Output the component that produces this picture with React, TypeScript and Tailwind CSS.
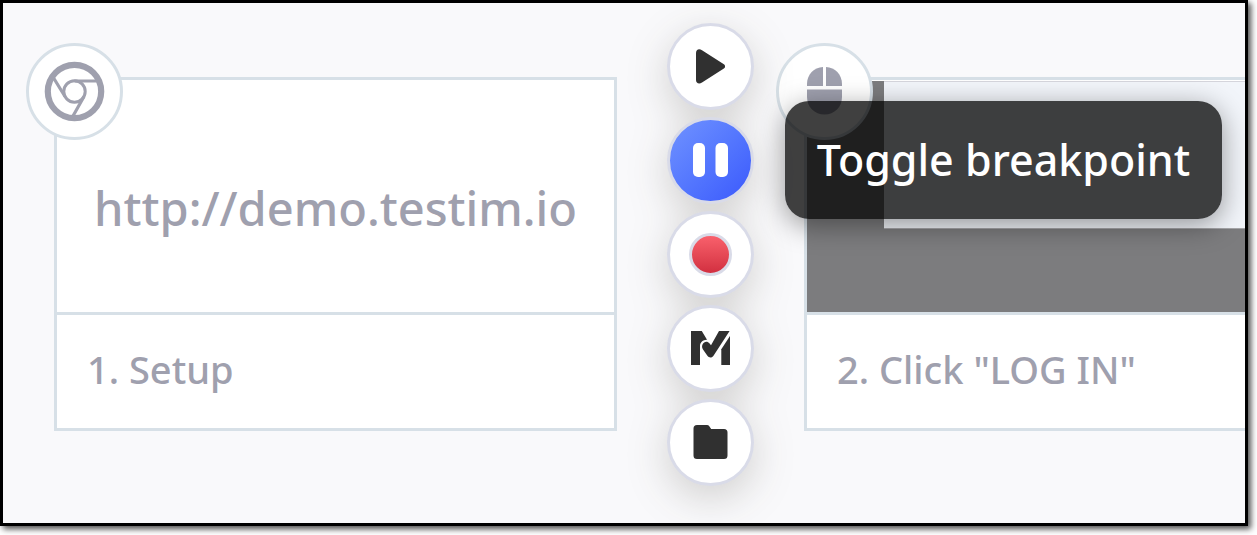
import type { ReactNode } from "react";

function ChromeIcon() {
  return (
    <svg viewBox="0 0 61 61" className="size-[61px]" fill="none" stroke="#9fa0ae" aria-hidden="true">
      <circle cx="30.500" cy="30.500" r="26.700" strokeWidth="6.200" />
      <circle cx="30.500" cy="30.500" r="10.700" strokeWidth="3" />
      <path d="M30.500 20H53.500M21 35.500L9 16M40 35.500L29 55" strokeWidth="3.200" />
    </svg>
  );
}

function MouseIcon() {
  return (
    <svg viewBox="0 0 35 49" className="h-[49px] w-[35px]" fill="#9fa0ae" aria-hidden="true">
      <path d="M16 0V19H0V17C0 7.500 7 0.400 16 0Z" />
      <path d="M19 0C28 0.400 35 7.500 35 17V19H19Z" />
      <path d="M0 22.500H35V30C35 40 27.500 47.500 17.500 47.500S0 40 0 30Z" />
    </svg>
  );
}

function PlayIcon() {
  return (
    <svg viewBox="0 0 30 35" className="h-[35px] w-[30px]" fill="#303030" aria-hidden="true">
      <path d="M0 4C0 0.500 3 -0.800 6 1.200L27.500 15C29.600 16.300 29.600 18.500 27.500 19.800L6 33.500C3 35.500 0 34.200 0 31Z" />
    </svg>
  );
}

function PauseIcon() {
  return (
    <svg viewBox="0 0 35 35" className="size-[35px]" fill="#ffffff" aria-hidden="true">
      <rect width="12" height="34" rx="5" />
      <rect x="22.500" width="12.500" height="34" rx="5" />
    </svg>
  );
}

function MarkIcon() {
  return (
    <svg viewBox="0 0 39 35" className="h-[35px] w-[39px]" fill="#303030" aria-hidden="true">
      <path d="M0 0H10.800L16.200 8.900C12.500 8.500 9 11.500 9 15V34H0Z" />
      <path d="M28 0H38.600L22.500 24.700C21 27 18 27 16.400 24.800L12 18.500C8.800 13.500 14.800 7.800 18.600 12.500L20 14.200Z" />
      <path d="M39 5V34H30.300V18.300Z" />
    </svg>
  );
}

function FolderIcon() {
  return (
    <svg viewBox="0 0 35 35" className="size-[35px]" fill="#303030" aria-hidden="true">
      <path d="M4 0H14Q15.500 0 16.300 1.200L18.200 4H31Q34.500 4 34.500 7.500V30.500Q34.500 34 31 34H4Q0.500 34 0.500 30.500V3.500Q0.500 0 4 0Z" />
    </svg>
  );
}

function RoundButton({ label, active, children }: { label: string; active?: boolean; children: ReactNode }) {
  return (
    <button
      type="button"
      aria-label={label}
      className={
        active
          ? "flex size-[87px] items-center justify-center rounded-full border-3 border-[#d9dbe8] bg-linear-to-br from-[#7394ff] to-[#3a55fc] bg-origin-border"
          : "flex size-[87px] items-center justify-center rounded-full border-3 border-[#d9dbe8] bg-white"
      }
    >
      {children}
    </button>
  );
}

function StepCard({
  icon,
  title,
  className,
  children,
}: {
  icon: ReactNode;
  title: string;
  className: string;
  children: ReactNode;
}) {
  return (
    <article className={`relative mt-[54px] flex flex-col border-3 border-[#d7e0e7] bg-white ${className}`}>
      <div className="flex h-[232px] flex-col">{children}</div>
      <h2 className="flex h-[116px] items-center border-t-3 border-[#d7e0e7] px-[30px] pb-1 text-[38px] font-medium whitespace-nowrap text-[#9fa0ae]">
        {title}
      </h2>
      <div className="absolute -top-[37px] -left-[31px] flex size-[97px] items-center justify-center rounded-full border-3 border-[#d7e0e7] bg-white">
        {icon}
      </div>
    </article>
  );
}

export default function App() {
  return (
    <div className="flex min-h-screen bg-white pr-[9px] pb-[9px] font-['Noto_Sans',sans-serif]">
      <main className="flex min-w-0 flex-1 items-start overflow-hidden border-3 border-black bg-[#f9f9fb] pt-5 pl-[51px] shadow-[3px_3px_6px_rgba(0,0,0,0.7)]">
        <StepCard className="w-[563px] shrink-0" title="1. Setup" icon={<ChromeIcon />}>
          <p className="flex flex-1 items-center justify-center pt-6 text-[47px] font-medium whitespace-nowrap text-[#9fa0ae]">
            http://demo.testim.io
          </p>
        </StepCard>

        <div className="relative z-10 mx-[50px] shrink-0">
          <div className="flex flex-col gap-[7px] drop-shadow-[0_12px_20px_rgba(48,44,30,0.2)]">
            <RoundButton label="Play from here">
              <PlayIcon />
            </RoundButton>
            <RoundButton label="Toggle breakpoint" active>
              <PauseIcon />
            </RoundButton>
            <RoundButton label="Record">
              <span className="size-[43px] rounded-full border-3 border-[#d9dbe8] bg-linear-to-b from-[#f9606c] to-[#d22f40]" />
            </RoundButton>
            <RoundButton label="Add validation">
              <MarkIcon />
            </RoundButton>
            <RoundButton label="Open folder">
              <FolderIcon />
            </RoundButton>
          </div>
          <div
            role="tooltip"
            className="absolute top-[78px] left-full ml-[31px] flex h-[118px] w-[437px] items-center justify-center rounded-3xl bg-black/75 text-[43px] font-medium whitespace-nowrap text-white shadow-[0_6px_28px_rgba(0,0,0,0.4)]"
          >
            Toggle breakpoint
          </div>
        </div>

        <StepCard className="min-w-0 flex-1 border-r-0" title={'2. Click "LOG IN"'} icon={<MouseIcon />}>
          <div className="mt-px flex flex-1 flex-col bg-[#7c7c7e] pl-[77px]">
            <div className="h-[148px] border-t border-b border-t-[#d5d5dc] border-b-[#a5a5a8] bg-[#f2f5fa]" />
          </div>
        </StepCard>
      </main>
    </div>
  );
}
